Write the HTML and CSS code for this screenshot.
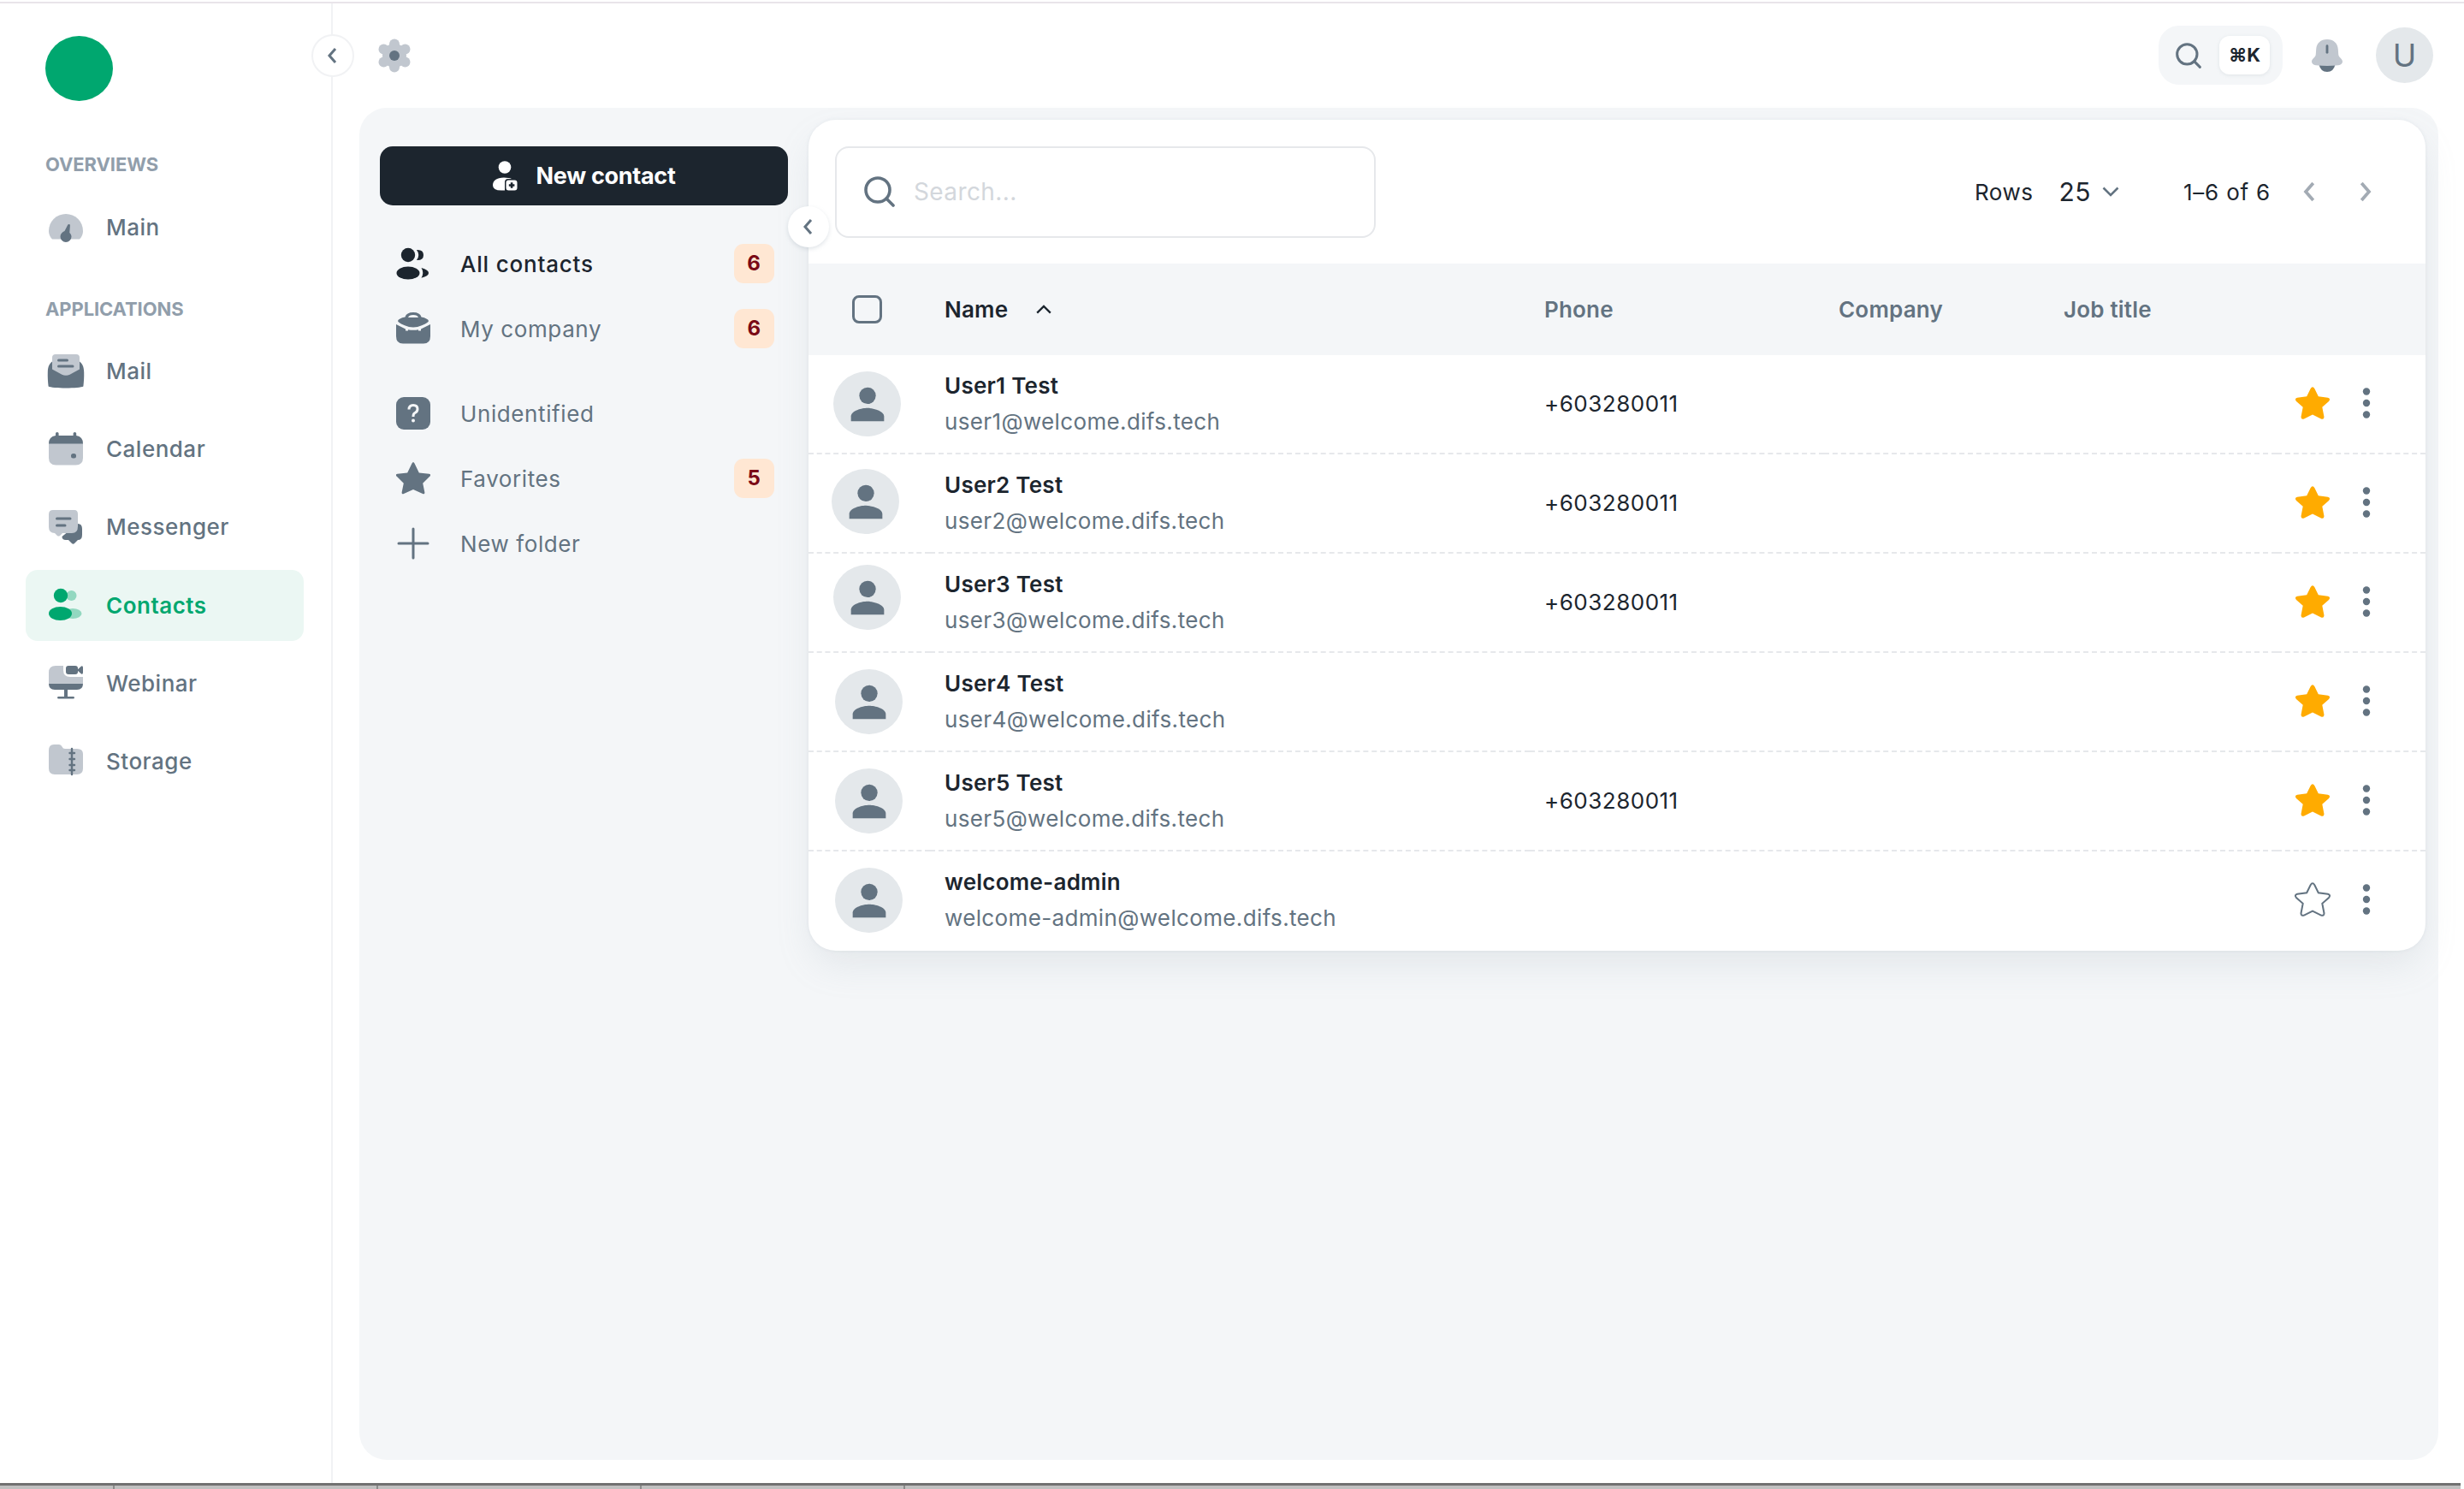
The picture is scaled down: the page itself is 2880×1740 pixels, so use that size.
FILE: index.html
```html
<!DOCTYPE html>
<html lang="en">
<head>
    <meta charset="UTF-8">
    <meta name="viewport" content="width=device-width, initial-scale=1.0">
    <title>Contacts</title>
    <link rel="stylesheet" href="styles.css">
</head>
<body>
    <!-- shared icons -->
    <svg class="sprite" aria-hidden="true">
        <symbol id="i-left" viewBox="0 0 24 24"><path d="M15 4l-7 8 7 8" fill="none" stroke="currentColor" stroke-width="3"/></symbol>
        <symbol id="i-right" viewBox="0 0 24 24"><path d="M9 4l7 8-7 8" fill="none" stroke="currentColor" stroke-width="3"/></symbol>
        <symbol id="i-search" viewBox="0 0 36 36"><circle cx="16" cy="16" r="14" fill="none" stroke="currentColor" stroke-width="3.6"/><path d="M26 26l8 8" fill="none" stroke="currentColor" stroke-width="3.6" stroke-linecap="round"/></symbol>
        <symbol id="i-person" viewBox="0 0 24 24"><circle cx="12" cy="8" r="4"/><path d="M12 14c-2.67 0-8 1.34-8 4v2.4h16V18c0-2.660-5.330-4-8-4z"/></symbol>
        <symbol id="i-star" viewBox="0 0 42 40"><path d="M18.600 3.200Q21-.6 23.400 3.200L27.800 12.300L38.900 13.800Q42.600 14.800 40 18L32.300 24.800L34.500 36.200Q34.400 39.600 31 38.600L21 33.600L11 38.600Q7.600 39.600 7.500 36.200L9.700 24.800L2 18Q-.6 14.800 3.100 13.800L14.200 12.300Z"/></symbol>
        <symbol id="i-more" viewBox="0 0 10 36"><circle cx="5" cy="4.500" r="4.200"/><circle cx="5" cy="18" r="4.200"/><circle cx="5" cy="31.500" r="4.200"/></symbol>
    </svg>

    <div class="app">
        <aside class="sidebar">
            <div class="logo"></div>
            <h2 class="nav-title">OVERVIEWS</h2>
            <nav class="nav">
                <a href="#" class="nav-item">
                    <svg viewBox="0 0 44 44"><path class="soft" d="M6 35.500C3 32.500 2 29 2 26a20 20 0 0 1 40 0c0 3-1 6.500-4 9.500z"/><path d="M25.500 18c1 0 1.500.6 1.400 1.600l-.6 8.400c1.500 1.400 2.200 3 2.200 4.500a6.500 6.500 0 0 1-13 0c0-3.300 2.400-5.400 5-6.500l3.600-7q.5-1 1.400-1z"/></svg>
                    <span>Main</span>
                </a>
            </nav>
            <h2 class="nav-title nav-title-apps">APPLICATIONS</h2>
            <nav class="nav nav-apps">
                <a href="#" class="nav-item">
                    <svg viewBox="0 0 44 44"><path d="M7 10c-4 2-6 6-6.200 13-.2 6 .2 11 .8 16.500 4 2.600 36.800 2.600 40.800 0 .6-5.500 1-10.500.8-16.500C43 16 41 12 37 10z"/><path class="soft" d="M10 2h24q4 0 4 4v13.500L27 25.500q-5 2.500-10 0L6 19.500V6q0-4 4-4z"/><path class="line" d="M13.500 9h10M13.500 16h16.500"/></svg>
                    <span>Mail</span>
                </a>
                <a href="#" class="nav-item">
                    <svg viewBox="0 0 44 44"><path class="soft" d="M2 15h40v17q0 8.500-8.500 8.500h-23Q2 40.500 2 32z"/><path d="M2 15.500Q2 7 10 6V3.500q0-1.500 1.800-1.500t1.800 1.500V6h17V3.500q0-1.500 1.800-1.500t1.800 1.500V6Q42 7 42 15.500z"/><rect x="28" y="27" width="6" height="5.500" rx="2.500"/></svg>
                    <span>Calendar</span>
                </a>
                <a href="#" class="nav-item">
                    <svg viewBox="0 0 44 44"><path d="M36 18q5 0 5 6v7q0 6-5 6l-4 4q-1.500 1.300-3 0l-4-4h-3q-4.500 0-4.500-4z"/><path class="soft" d="M7 2h25q4 0 4 5v14q0 8-7 8H18l-3 3q-1.500 1-3 0l-3-3Q2 29 2 22V7q0-5 5-5z"/><path class="line" d="M11.500 12h15.500M11.500 20h9.500"/></svg>
                    <span>Messenger</span>
                </a>
                <a href="#" class="nav-item active">
                    <svg viewBox="0 0 44 44"><ellipse class="soft" cx="28.500" cy="11" rx="6" ry="6"/><ellipse class="soft" cx="30" cy="32" rx="10.500" ry="6"/><circle cx="16" cy="11" r="8.200"/><ellipse cx="15.500" cy="32" rx="13.500" ry="8"/></svg>
                    <span>Contacts</span>
                </a>
                <a href="#" class="nav-item">
                    <svg viewBox="0 0 44 44"><path class="soft" d="M10 2h32v21H2V10q0-8 8-8z"/><path d="M2 23h40q0 7-7 7H24v8h6.500q1.500 0 1.500 1.300t-1.500 1.300h-17Q12 40.600 12 39.300t1.500-1.300H20v-8H9q-7 0-7-7z"/><path class="gap" d="M19 0h25v15H27q-8 0-8-8z"/><rect x="22" y="2" width="14" height="10" rx="3"/><path d="M35 7l5-4.500q2-.8 2 1.500v6q0 2.300-2 1.500z"/></svg>
                    <span>Webinar</span>
                </a>
                <a href="#" class="nav-item">
                    <svg viewBox="0 0 44 44"><path class="soft" d="M2 10q0-7 6-7h6q2.500 0 3.500 2.500T21 8h14q7 0 7 6v17q0 7-7 7H9q-7 0-7-7z"/><path class="line thin" d="M29 8v30M26.500 13h5.500M26.500 20h5.500M26.500 27h5.500M26.500 33h5.500"/></svg>
                    <span>Storage</span>
                </a>
            </nav>
            <button class="round-btn sidebar-toggle"><svg><use href="#i-left"/></svg></button>
        </aside>

        <main class="main">
            <header class="topbar">
                <svg class="gear" viewBox="0 0 38 40"><g class="soft"><circle cx="19" cy="20" r="14"/><circle cx="19" cy="6.500" r="6"/><circle cx="19" cy="33.500" r="6"/><circle cx="6.500" cy="12.500" r="6"/><circle cx="31.500" cy="12.500" r="6"/><circle cx="6.500" cy="27.500" r="6"/><circle cx="31.500" cy="27.500" r="6"/></g><circle cx="19" cy="20" r="6"/></svg>
                <div class="quick-search">
                    <svg><use href="#i-search"/></svg>
                    <kbd>⌘K</kbd>
                </div>
                <svg class="bell" viewBox="0 0 38 40"><path d="M9 31h20q-2 9-10 9T9 31z"/><path class="soft" d="M19 0c8 0 13 5 13.500 12l.5 7c.2 3 5 5 5 8.500 0 2.500-2 4-5 4.300q-14 1.500-28 0C2 31.500 0 30 0 27.500 0 24 4.800 22 5 19l.5-7C6 5 11 0 19 0z"/><path class="line" d="M19 8v8"/></svg>
                <div class="user">U</div>
            </header>

            <section class="panel">
                <div class="folders">
                    <button class="new-contact">
                        <svg viewBox="0 0 30 36"><circle cx="15" cy="7.500" r="7.300"/><path d="M15 34.500H11Q1 34.500 1 28.500 1 20 14 19.500q6 0 9 1.500h-4q-4 0-4 4z"/><path fill-rule="evenodd" d="M19.500 22.500h7q3 0 3 3v6q0 3-3 3h-7q-3 0-3-3v-6q0-3 3-3zm2.300 2.700v2h-2v2.600h2v2h2.600v-2h2v-2.600h-2v-2z"/></svg>
                        New contact
                    </button>
                    <ul class="folder-list">
                        <li class="folder selected">
                            <svg viewBox="0 0 40 40"><circle cx="14" cy="10" r="8.200"/><ellipse cx="14" cy="31" rx="13.500" ry="7.500"/><path d="M24 4q8-.5 8 6t-8 6q4.500-6 0-12zM29.500 25q8.500 2.500 8.500 6t-8.500 5.800q3.500-6 0-11.800z"/></svg>
                            <span>All contacts</span><b class="badge">6</b>
                        </li>
                        <li class="folder">
                            <svg viewBox="0 0 40 40"><path d="M0 15l11 5.500v2h3v-1.300q6 1.300 12 0v1.300h3v-2L40 15v14q0 8.500-8 8.500H8Q0 37.500 0 29z"/><path d="M2 11q1-3 8.500-4.500Q12 1 20 1t9.500 5.500Q37 8 38 11q0 2-8 5.200-10 4.500-20 0Q2 13 2 11z"/><path class="cut" d="M14 7q1-3 6-3t6 3z"/></svg>
                            <span>My company</span><b class="badge">6</b>
                        </li>
                        <li class="folder spaced">
                            <svg viewBox="0 0 40 40"><rect y="1" width="40" height="38" rx="9"/><path class="cut-line" d="M15 15.500q0-5 5-5t5 4.500q0 3-3 4.500-2 1-2 4v.5"/><circle class="cut" cx="20" cy="28.500" r="2"/></svg>
                            <span>Unidentified</span>
                        </li>
                        <li class="folder">
                            <svg viewBox="0 0 40 40"><path d="M18.500 2.500q1.500-3 3 0l5.300 11 11.700 1.300q3 .7 1 2.700l-8.300 8.300 2.200 10.700q0 2.500-2.300 1.600L20 33 8.900 38.100q-2.300.9-2.300-1.600l2.200-10.700L.5 17.500q-2-2 1-2.700l11.700-1.300z"/></svg>
                            <span>Favorites</span><b class="badge">5</b>
                        </li>
                        <li class="folder">
                            <svg viewBox="0 0 40 40"><path class="line" d="M20 3v34M3 20h34"/></svg>
                            <span>New folder</span>
                        </li>
                    </ul>
                    <button class="round-btn folders-toggle"><svg><use href="#i-left"/></svg></button>
                </div>

                <div class="card">
                    <div class="card-toolbar">
                        <div class="search-box">
                            <svg><use href="#i-search"/></svg>
                            <input type="text" placeholder="Search...">
                        </div>
                        <div class="pager">
                            <span class="rows-label">Rows</span>
                            <span class="rows-value">25</span>
                            <svg class="caret" viewBox="0 0 20 12"><path d="M1.500 1.500L10 10l8.500-8.500"/></svg>
                            <span class="range">1–6 of 6</span>
                            <svg class="arrow"><use href="#i-left"/></svg>
                            <svg class="arrow"><use href="#i-right"/></svg>
                        </div>
                    </div>

                    <table class="contacts">
                        <colgroup><col class="c-avatar"><col class="c-name"><col class="c-phone"><col class="c-company"><col class="c-job"><col class="c-actions"></colgroup>
                        <thead>
                            <tr>
                                <th class="check-cell"><span class="checkbox"></span></th>
                                <th class="sorted">Name <svg class="caret" viewBox="0 0 20 12"><path d="M1.500 10.500L10 2l8.500 8.500"/></svg></th>
                                <th>Phone</th>
                                <th>Company</th>
                                <th>Job title</th>
                                <th></th>
                            </tr>
                        </thead>
                        <tbody>
                            <tr>
                                <td><div class="avatar"><svg><use href="#i-person"/></svg></div></td>
                                <td><p class="name">User1 Test</p><p class="email">user1@welcome.difs.tech</p></td>
                                <td class="phone">+603280011</td><td></td><td></td>
                                <td><div class="actions"><svg class="star on"><use href="#i-star"/></svg><svg class="more"><use href="#i-more"/></svg></div></td>
                            </tr>
                            <tr>
                                <td><div class="avatar"><svg><use href="#i-person"/></svg></div></td>
                                <td><p class="name">User2 Test</p><p class="email">user2@welcome.difs.tech</p></td>
                                <td class="phone">+603280011</td><td></td><td></td>
                                <td><div class="actions"><svg class="star on"><use href="#i-star"/></svg><svg class="more"><use href="#i-more"/></svg></div></td>
                            </tr>
                            <tr>
                                <td><div class="avatar"><svg><use href="#i-person"/></svg></div></td>
                                <td><p class="name">User3 Test</p><p class="email">user3@welcome.difs.tech</p></td>
                                <td class="phone">+603280011</td><td></td><td></td>
                                <td><div class="actions"><svg class="star on"><use href="#i-star"/></svg><svg class="more"><use href="#i-more"/></svg></div></td>
                            </tr>
                            <tr>
                                <td><div class="avatar"><svg><use href="#i-person"/></svg></div></td>
                                <td><p class="name">User4 Test</p><p class="email">user4@welcome.difs.tech</p></td>
                                <td class="phone"></td><td></td><td></td>
                                <td><div class="actions"><svg class="star on"><use href="#i-star"/></svg><svg class="more"><use href="#i-more"/></svg></div></td>
                            </tr>
                            <tr>
                                <td><div class="avatar"><svg><use href="#i-person"/></svg></div></td>
                                <td><p class="name">User5 Test</p><p class="email">user5@welcome.difs.tech</p></td>
                                <td class="phone">+603280011</td><td></td><td></td>
                                <td><div class="actions"><svg class="star on"><use href="#i-star"/></svg><svg class="more"><use href="#i-more"/></svg></div></td>
                            </tr>
                            <tr>
                                <td><div class="avatar"><svg><use href="#i-person"/></svg></div></td>
                                <td><p class="name">welcome-admin</p><p class="email">welcome-admin@welcome.difs.tech</p></td>
                                <td class="phone"></td><td></td><td></td>
                                <td><div class="actions"><svg class="star"><use href="#i-star"/></svg><svg class="more"><use href="#i-more"/></svg></div></td>
                            </tr>
                        </tbody>
                    </table>
                </div>
            </section>
        </main>
    </div>
    <footer class="status-bar"></footer>
</body>
</html>
```

FILE: styles.css
```css
:root {
    --primary-color: #00a76f;
    --text-color: #1c252e;
    --muted-color: #637381;
    --label-color: #919eab;
    --soft-color: #c1c7cf;
    --panel-color: #f4f6f8;
    --border-color: #e6e8eb;
}

* {
    margin: 0;
    padding: 0;
    box-sizing: border-box;
    font-family: Inter, 'Liberation Sans', sans-serif;
}

body {
    width: 2880px;
    height: 1740px;
    overflow: hidden;
    display: flex;
    flex-direction: column;
    background-color: white;
    color: var(--text-color);
    font-size: 26px;
}

button {
    border: none;
    cursor: pointer;
}

svg {
    display: block;
    flex-shrink: 0;
    fill: currentColor;
}

.sprite {
    position: absolute;
    width: 0;
    height: 0;
}

.soft {
    fill: var(--soft-color);
}

.line {
    fill: none;
    stroke: currentColor;
    stroke-width: 3;
    stroke-linecap: round;
}

.thin {
    stroke-width: 2.4;
}

.gap {
    fill: white;
}

.app {
    display: flex;
    height: 1731px;
    margin-top: 2px;
    border-top: 2px solid #e9e4ea;
}

/* Sidebar */
.sidebar {
    position: relative;
    width: 389px;
    padding: 38px 32px 0 30px;
    border-right: 2px solid #f1f2f4;
}

.logo {
    width: 79px;
    height: 76px;
    margin-left: 23px;
    border-radius: 50%;
    background-color: var(--primary-color);
}

.nav-title {
    margin: 60px 0 0 23px;
    height: 28px;
    line-height: 28px;
    font-size: 22px;
    font-weight: 700;
    letter-spacing: -0.1px;
    color: var(--label-color);
}

.nav-title + .nav {
    margin-top: 18px;
}

.nav-title.nav-title-apps {
    margin-top: 40px;
}

.nav-title + .nav-apps {
    margin-top: 17px;
}

.nav {
    display: flex;
    flex-direction: column;
    gap: 8.2px;
}

.nav-item {
    display: flex;
    align-items: center;
    gap: 25px;
    height: 83px;
    padding-left: 25px;
    border-radius: 14px;
    color: var(--muted-color);
    font-weight: 500;
    letter-spacing: 0.5px;
    text-decoration: none;
}

.nav-item svg {
    width: 44px;
    height: 44px;
}

.nav-item.active {
    background-color: #ebf7f3;
    color: var(--primary-color);
    font-weight: 600;
}

.nav-item.active .soft {
    fill: #93d8c0;
}

.round-btn {
    position: absolute;
    display: flex;
    align-items: center;
    justify-content: center;
    border-radius: 50%;
    background-color: white;
    color: var(--muted-color);
}

.round-btn svg {
    width: 24px;
    height: 24px;
}

.sidebar-toggle {
    top: 36px;
    right: -27px;
    width: 50px;
    height: 50px;
    border: 2px solid #f1f2f4;
}

/* Top bar */
.main {
    flex: 1;
    padding: 0 30px 0 31px;
}

.topbar {
    display: flex;
    align-items: center;
    height: 122px;
    padding: 0 6px 0 22px;
    color: var(--muted-color);
}

.topbar > * {
    margin-bottom: 1px;
}

.gear {
    width: 38px;
    height: 40px;
    margin-right: auto;
}

.quick-search {
    display: flex;
    align-items: center;
    gap: 21px;
    width: 145px;
    height: 69px;
    padding-left: 20px;
    border-radius: 24px;
    background-color: var(--panel-color);
}

.quick-search svg {
    width: 30px;
    height: 30px;
}

.quick-search kbd {
    width: 59px;
    height: 45px;
    border-radius: 12px;
    background-color: white;
    box-shadow: 0 1px 4px rgba(145, 158, 171, 0.2);
    color: var(--text-color);
    font-size: 22px;
    font-weight: 700;
    line-height: 45px;
    text-align: center;
}

.bell {
    width: 36px;
    height: 40px;
    margin: 0 39px 0 34px;
}

.user {
    width: 67px;
    height: 65px;
    border-radius: 50%;
    background-color: #e4e8eb;
    font-size: 37px;
    line-height: 65px;
    text-align: center;
}

/* Content panel */
.panel {
    display: flex;
    height: 1580px;
    padding: 14px 15px 0 24px;
    border-radius: 32px;
    background-color: var(--panel-color);
}

.folders {
    position: relative;
    width: 501px;
    padding: 31px 24px 0 0;
}

.new-contact {
    display: flex;
    align-items: center;
    justify-content: center;
    gap: 21px;
    width: 477px;
    height: 69px;
    border-radius: 15px;
    background-color: var(--text-color);
    color: white;
    font-size: 27px;
    font-weight: 700;
    letter-spacing: -0.3px;
}

.new-contact svg {
    width: 30px;
    height: 36px;
}

.folder-list {
    margin-top: 30px;
    list-style: none;
}

.folder {
    display: flex;
    align-items: center;
    height: 76px;
    padding: 0 16px 0 19px;
    color: var(--muted-color);
    letter-spacing: 0.6px;
}

.folder svg {
    width: 40px;
    height: 40px;
    margin-right: 35px;
}

.folder.spaced {
    margin-top: 23px;
}

.folder.selected {
    color: var(--text-color);
    font-weight: 500;
    letter-spacing: 0.8px;
}

.cut {
    fill: var(--panel-color);
}

.cut-line {
    fill: none;
    stroke: var(--panel-color);
    stroke-width: 3;
}

.badge {
    width: 47px;
    height: 46px;
    margin-left: auto;
    border-radius: 11px;
    background-color: #ffe7d3;
    color: #7a0916;
    font-size: 24px;
    font-weight: 700;
    line-height: 46px;
    text-align: center;
}

.folders-toggle {
    top: 101px;
    right: -24px;
    width: 48px;
    height: 48px;
    z-index: 1;
    box-shadow: 0 2px 5px rgba(145, 158, 171, 0.28);
}

/* Contacts card */
.card {
    width: 1890px;
    height: 971px;
    overflow: hidden;
    border-radius: 32px;
    background-color: white;
    box-shadow: 0 0 4px rgba(145, 158, 171, 0.14), 0 20px 44px -6px rgba(145, 158, 171, 0.18);
}

.card-toolbar {
    display: flex;
    align-items: center;
    justify-content: space-between;
    height: 168px;
    padding: 0 56px 0 31px;
}

.search-box {
    display: flex;
    align-items: center;
    gap: 22px;
    width: 632px;
    height: 107px;
    padding-left: 32px;
    border: 2px solid var(--border-color);
    border-radius: 16px;
    color: var(--muted-color);
}

.search-box svg {
    width: 36px;
    height: 36px;
}

.search-box input {
    width: 400px;
    border: none;
    outline: none;
    background: none;
    font-size: 28px;
    letter-spacing: 0.4px;
}

.search-box input::placeholder {
    color: #d3d7dc;
}

.pager {
    display: flex;
    align-items: center;
}

.rows-label {
    letter-spacing: 0.5px;
}

.rows-value {
    margin-left: 30px;
    font-size: 30px;
    letter-spacing: 0.5px;
}

.range {
    letter-spacing: 0.8px;
}

.caret {
    width: 20px;
    height: 12px;
    fill: none;
    stroke: currentColor;
    stroke-width: 2.5;
}

.pager .caret {
    margin: 0 75px 0 13px;
    color: var(--muted-color);
}

.arrow {
    width: 30px;
    height: 30px;
    color: #a3abb4;
}

.range + .arrow {
    margin: 0 34px 0 31px;
}

.contacts {
    width: 1890px;
    table-layout: fixed;
    border-collapse: separate;
    border-spacing: 0;
}

.c-avatar { width: 142px; }
.c-name { width: 701px; }
.c-phone { width: 344px; }
.c-company { width: 263px; }
.c-job { width: 266px; }
.c-actions { width: 174px; }

.contacts th {
    height: 107px;
    padding-left: 17px;
    background-color: var(--panel-color);
    color: var(--muted-color);
    font-weight: 600;
    letter-spacing: 0.2px;
    text-align: left;
}

.contacts th.sorted {
    color: var(--text-color);
}

.contacts th .caret {
    display: inline-block;
    height: 11px;
    margin: 0 0 4px 25px;
}

.contacts th.check-cell {
    padding-left: 51px;
}

.checkbox {
    display: block;
    width: 35px;
    height: 33px;
    border: 3px solid var(--muted-color);
    border-radius: 8px;
}

.contacts td {
    height: 116px;
    padding-left: 17px;
    border-bottom: 2px dashed var(--border-color);
}

.contacts tr:last-child td {
    border-bottom-color: transparent;
}

.contacts td:first-child {
    padding-left: 31px;
}

.contacts .phone {
    padding-bottom: 2px;
    letter-spacing: 0.5px;
}

.avatar {
    display: flex;
    align-items: center;
    justify-content: center;
    width: 79px;
    height: 76px;
    border-radius: 50%;
    background-color: #e4e8eb;
    color: var(--muted-color);
}

.avatar svg {
    width: 60px;
    height: 58px;
}

/* the first three avatars sit slightly off the row axis */
.contacts tr:nth-child(1) .avatar { transform: translate(-2px, 0); }
.contacts tr:nth-child(2) .avatar { transform: translate(-4px, -2px); }
.contacts tr:nth-child(3) .avatar { transform: translate(-2px, -6px); }

.name {
    height: 42px;
    line-height: 42px;
    font-weight: 600;
    letter-spacing: 0.25px;
}

.email {
    height: 42px;
    line-height: 42px;
    color: var(--muted-color);
    letter-spacing: 0.36px;
}

.actions {
    display: flex;
    align-items: center;
    gap: 37px;
    padding: 0 0 2px 4px;
}

.star {
    width: 42px;
    height: 40px;
    fill: none;
    stroke: var(--muted-color);
    stroke-width: 2;
    overflow: visible;
}

.star.on {
    fill: #ffab00;
    stroke: none;
}

.more {
    width: 10px;
    height: 36px;
    color: var(--muted-color);
}

.status-bar {
    width: 2876px;
    height: 7px;
    border-top: 3px solid #717171;
    background: repeating-linear-gradient(90deg, transparent 0 132px, #8d8d8d 132px 134px, transparent 134px 308px) 0 0 / 1060px 100% no-repeat #c0c0c0;
}
```
